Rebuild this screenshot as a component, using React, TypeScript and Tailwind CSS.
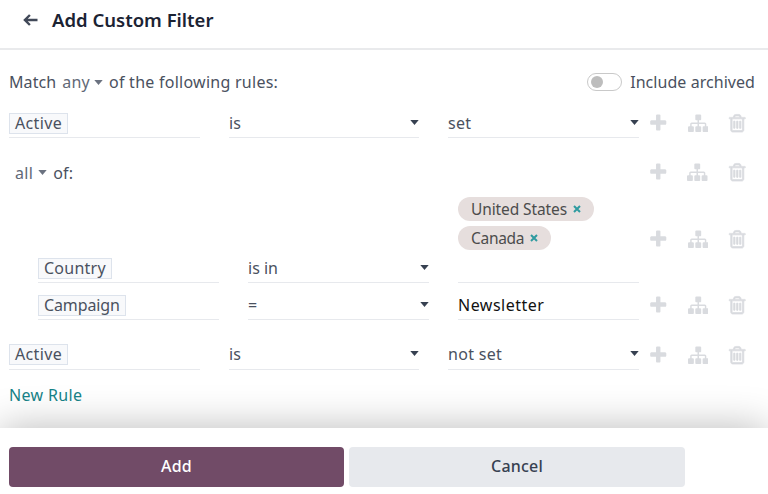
import type { ReactNode } from "react";

const PLUS =
  "M1600 736v192q0 40-28 68t-68 28h-416v416q0 40-28 68t-68 28h-192q-40 0-68-28t-28-68v-416h-416q-40 0-68-28t-28-68v-192q0-40 28-68t68-28h416v-416q0-40 28-68t68-28h192q40 0 68 28t28 68v416h416q40 0 68 28t28 68z";
const SITEMAP =
  "M1792 1248v320q0 40-28 68t-68 28h-320q-40 0-68-28t-28-68v-320q0-40 28-68t68-28h96v-192h-512v192h96q40 0 68 28t28 68v320q0 40-28 68t-68 28h-320q-40 0-68-28t-28-68v-320q0-40 28-68t68-28h96v-192h-512v192h96q40 0 68 28t28 68v320q0 40-28 68t-68 28h-320q-40 0-68-28t-28-68v-320q0-40 28-68t68-28h96v-192q0-52 38-90t90-38h512v-192h-96q-40 0-68-28t-28-68v-320q0-40 28-68t68-28h320q40 0 68 28t28 68v320q0 40-28 68t-68 28h-96v192h512q52 0 90 38t38 90v192h96q40 0 68 28t28 68z";
const TRASH =
  "M704 736v576q0 14-9 23t-23 9h-64q-14 0-23-9t-9-23v-576q0-14 9-23t23-9h64q14 0 23 9t9 23zm256 0v576q0 14-9 23t-23 9h-64q-14 0-23-9t-9-23v-576q0-14 9-23t23-9h64q14 0 23 9t9 23zm256 0v576q0 14-9 23t-23 9h-64q-14 0-23-9t-9-23v-576q0-14 9-23t23-9h64q14 0 23 9t9 23zm128 724v-948h-896v948q0 22 7 40.5t14.5 27 10.5 8.5h832q3 0 10.5-8.5t14.5-27 7-40.5zm-672-1076h448l-48-117q-7-9-17-11h-317q-10 2-17 11zm928 32v64q0 14-9 23t-23 9h-96v948q0 83-47 143.5t-113 60.5h-832q-66 0-113-58.5t-47-141.5v-952h-96q-14 0-23-9t-9-23v-64q0-14 9-23t23-9h309l70-167q15-37 54-63t79-26h320q40 0 79 26t54 63l70 167h309q14 0 23 9t9 23z";

function Glyph({ d, label, className = "" }: { d: string; label: string; className?: string }) {
  return (
    <button aria-label={label} className="block">
      <svg viewBox="0 0 1792 1792" className={`block size-[20.5px] fill-current ${className}`}>
        <path d={d} />
      </svg>
    </button>
  );
}

function Actions() {
  return (
    <div className="ml-[9px] flex items-center gap-[19px] text-[#d9dbdf]">
      <Glyph d={PLUS} label="Add rule" />
      <Glyph d={SITEMAP} label="Add branch" />
      <Glyph d={TRASH} label="Delete" className="stroke-current stroke-[60px]" />
    </div>
  );
}

function Caret({ className = "" }: { className?: string }) {
  return (
    <svg viewBox="0 0 9 5" className={`h-[5px] w-[9px] shrink-0 fill-current ${className}`}>
      <path d="M0.3 0h8.4L4.5 5z" />
    </svg>
  );
}

function Field({ children, caret, className }: { children?: ReactNode; caret?: boolean; className: string }) {
  return (
    <div className={`flex h-[29px] items-center justify-between border-b border-[#e7e9ed] ${className}`}>
      {children}
      {caret && <Caret className="mb-px text-[#374151]" />}
    </div>
  );
}

function Tag({ children, className = "" }: { children: ReactNode; className?: string }) {
  return (
    <span className={`flex h-[21px] items-center border border-[#dde3ec] bg-[#f8f9fb] px-[5px] ${className}`}>
      {children}
    </span>
  );
}

function Pill({ children, className = "" }: { children: ReactNode; className?: string }) {
  return (
    <span className={`flex h-6 items-center gap-[6px] rounded-full bg-[#e6dedd] px-[13px] text-[15.5px] text-[#4c4c4c] ${className}`}>
      {children}
      <svg viewBox="0 0 8 8" className="h-2 w-2 stroke-[#2f9ba0] stroke-2">
        <path d="M1 1l6 6M7 1L1 7" />
      </svg>
    </span>
  );
}

export default function App() {
  return (
    <div className="flex h-[494px] w-[768px] flex-col overflow-hidden bg-white font-['Noto_Sans','Open_Sans',sans-serif] text-[16px] leading-5 text-[#4a5160]">
      <header className="flex h-[50px] shrink-0 items-center border-b-2 border-[#e9eaec] pb-[8px] pl-[23px]">
        <svg viewBox="0 0 15 12" className="h-3 w-[15px] fill-none stroke-[#414958] stroke-[2.4]">
          <path d="M14.5 6H1.8M6.9 1L1.9 6l5 5" />
        </svg>
        <h1 className="ml-[14px] text-[18.5px] font-semibold text-[#1b2333]">Add Custom Filter</h1>
      </header>

      <main className="flex h-[378px] shrink-0 flex-col pl-[9px]">
        <div className="mt-[22px] flex h-5 items-center">
          <span className="tracking-[0.1px]">Match</span>
          <span className="ml-[6px] tracking-[0.2px] text-[#626977]">any</span>
          <Caret className="ml-[4px] text-[#6b7280]" />
          <span className="ml-[6px] tracking-[0.26px]">of the following rules:</span>
          <span className="ml-auto mr-[8px] flex h-[18px] w-[35px] items-center rounded-full border border-[#c9c9c9] pl-[3px]">
            <span className="size-3 rounded-full bg-[#bdbdbd]" />
          </span>
          <span className="mr-[13px] tracking-[0.05px]">Include archived</span>
        </div>

        <div className="mt-[17px] flex h-[29px] items-center">
          <Field className="w-[191px]"><Tag className="tracking-[0.35px]">Active</Tag></Field>
          <Field className="ml-[29px] w-[190px]" caret>is</Field>
          <Field className="ml-[29px] w-[191px] tracking-[0.3px]" caret>set</Field>
          <Actions />
        </div>

        <div className="mt-[20px] flex h-[29px] items-center pl-[6px]">
          <span className="tracking-[0.3px] text-[#626977]">all</span>
          <Caret className="ml-[5px] text-[#6b7280]" />
          <span className="ml-[6px] tracking-[0.2px]">of:</span>
          <div className="ml-auto mr-[21px]"><Actions /></div>
        </div>

        <div className="mt-[10px] flex h-[86px] items-center pl-[29px]">
          <Field className="w-[181px] self-end"><Tag className="tracking-[0.25px]">Country</Tag></Field>
          <Field className="ml-[29px] w-[181px] self-end" caret>is in</Field>
          <div className="ml-[29px] flex h-[86px] w-[181px] flex-col items-start gap-[5px] border-b border-[#e7e9ed]">
            <Pill className="tracking-[-0.1px]">United States</Pill>
            <Pill className="tracking-[-0.3px]">Canada</Pill>
          </div>
          <div className="pb-[2px]"><Actions /></div>
        </div>

        <div className="mt-[8px] flex h-[29px] items-center pl-[29px]">
          <Field className="w-[181px]"><Tag className="tracking-[-0.12px]">Campaign</Tag></Field>
          <Field className="ml-[29px] w-[181px]" caret>=</Field>
          <Field className="ml-[29px] w-[181px] tracking-[0.5px] text-[#111]">Newsletter</Field>
          <Actions />
        </div>

        <div className="mt-[20px] flex h-[30px] items-center">
          <Field className="h-[30px] w-[191px] pb-px"><Tag className="tracking-[0.35px]">Active</Tag></Field>
          <Field className="ml-[29px] h-[30px] w-[190px] pb-px" caret>is</Field>
          <Field className="ml-[29px] h-[30px] w-[191px] pb-px tracking-[0.3px]" caret>not set</Field>
          <Actions />
        </div>
        <button className="mt-[15px] self-start tracking-[0.35px] text-[#168388]">New Rule</button>
      </main>

      <footer className="relative flex h-[66px] shrink-0 items-start gap-[5px] bg-white pl-[9px] pt-[19px] font-medium shadow-[0_0_40px_rgba(0,0,0,0.28)]">
        <button className="h-10 w-[335px] rounded-[4px] bg-[#714b67] pb-[2px] tracking-[0.2px] text-white">Add</button>
        <button className="h-10 w-[336px] rounded-[4px] bg-[#e7e9ed] pb-[2px] tracking-[0.2px] text-[#374151]">Cancel</button>
      </footer>
    </div>
  );
}
